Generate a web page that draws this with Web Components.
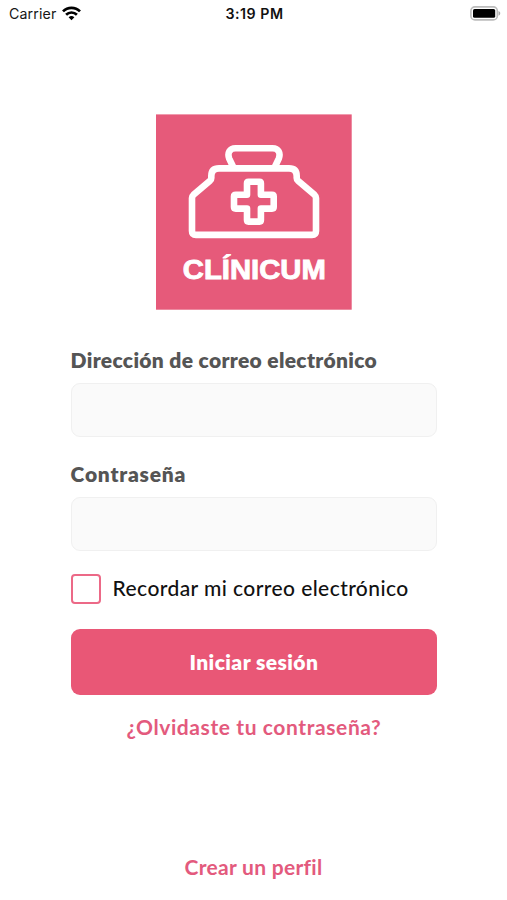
<!DOCTYPE html>
<html lang="es">
<head>
<meta charset="utf-8">
<title>Clínicum</title>
<style>
html,body{margin:0;height:100%;background:#fff;overflow:hidden}
body{font-family:Lato,"Open Sans",sans-serif;font-size:21px}
</style>
</head>
<body>
<login-screen></login-screen>
<script>
const define = (name, html, ready) => customElements.define(name, class extends HTMLElement {
  constructor() {
    super();
    this.attachShadow({ mode: 'open' }).innerHTML = html;
  }
  connectedCallback() { if (ready) ready(this, this.shadowRoot); }
});

// A single line of text, tracked so that its advance equals the width attribute.
define('tracked-text', `<style>
:host{display:inline-block;white-space:nowrap;line-height:24px}
span{display:inline-block;font-kerning:normal;font-variant-ligatures:none}
</style><span></span>`, (el, root) => {
  const span = root.querySelector('span');
  span.textContent = el.getAttribute('text');
  const want = Number(el.getAttribute('width'));
  const gap = (want - span.getBoundingClientRect().width) / span.textContent.length;
  span.style.letterSpacing = gap.toFixed(3) + 'px';
});

define('status-bar', `<style>
:host{display:grid;grid-template-columns:1fr auto 1fr;align-items:center;height:27px;padding:0 6px 0 9px;box-sizing:border-box;font-family:Inter,sans-serif;font-size:14.2px;color:#161616}
.left{display:flex;align-items:center;gap:5px}
.time{font-weight:600;color:#111;margin-right:1px}
.right{justify-self:end;display:flex}
svg{display:block}
</style>
<div class="left"><tracked-text text="Carrier" width="47.5"></tracked-text>
<svg width="19" height="15" viewBox="0 0 19 15"><g fill="none" stroke="#000" stroke-width="2.7"><path d="M1 5.4a12 12 0 0 1 17 0"/><path d="M4.1 8.7a7.7 7.7 0 0 1 10.8 0"/></g><path d="M9.5 14.2 6.6 11.3a4.2 4.2 0 0 1 5.8 0z"/></svg></div>
<div class="time"><tracked-text text="3:19 PM" width="58"></tracked-text></div>
<div class="right"><svg width="31" height="15" viewBox="0 0 31 15"><rect x=".9" y=".9" width="26.4" height="13" rx="4" fill="#fff" stroke="#bcbcbc" stroke-width="1.6"/><rect x="3" y="3" width="22.2" height="8.8" rx="1.6"/><path d="M28.5 5.1c2.3.8 2.3 3.8 0 4.6z" fill="#aaa"/></svg></div>`);

define('brand-logo', `<style>
:host{display:block;width:196px;height:196px}
svg{display:block}
text{font:bold 27px "Liberation Sans",Arial,sans-serif;fill:#fff;stroke:#fff;stroke-width:.9}
</style>
<svg width="196" height="196" viewBox="0 0 196 196">
<rect x="0" y=".4" width="195.7" height="195.3" fill="#e65a7a"/>
<g fill="none" stroke="#fff" stroke-width="6.6" stroke-linejoin="round">
<path d="M77.2 53 73.2 44.6C71.2 39 73.4 34.2 79.6 34.2H116.4C122.6 34.2 124.8 39 122.8 44.6L118.8 53"/>
<path d="M63 54.4H133Q140.7 54.4 140.7 62V64Q140.7 65.5 142 66.7L158.5 80.8Q160 82.2 160 84V117Q160 120.9 156 120.9H40Q36 120.9 36 117V84Q36 82.2 37.5 80.8L54 66.7Q55.3 65.5 55.3 64V62Q55.3 54.4 63 54.4Z"/>
<path d="M92.5 67.7H103.5Q104.9 67.7 104.9 69.2V80.8H116Q117.7 80.8 117.7 82.5V93Q117.7 94.6 116 94.6H104.9V106Q104.9 107.6 103.5 107.6H92.5Q91 107.6 91 106V94.6H79.8Q78 94.6 78 93V82.5Q78 80.8 79.8 80.8H91V69.2Q91 67.7 92.5 67.7Z"/>
</g>
<text x="26.8" y="165.3" textLength="143" lengthAdjust="spacingAndGlyphs">CLÍNICUM</text>
</svg>`);

define('form-field', `<style>
:host{display:block;color:#555;font-weight:800}
label{display:block;height:24px}
input{display:block;box-sizing:border-box;width:100%;height:54px;margin:12px 0 0;padding:0 14px;border:1.5px solid #f0f0f0;border-radius:9px;background:#fafafa;font:inherit;outline:0}
</style><label></label><input>`, (el, root) => {
  const t = document.createElement('tracked-text');
  t.setAttribute('text', el.getAttribute('label'));
  t.setAttribute('width', el.getAttribute('label-width'));
  root.querySelector('label').append(t);
  root.querySelector('input').type = el.getAttribute('type');
});

define('check-option', `<style>
:host{display:flex;align-items:center;gap:12px;height:30px;color:#111;font-weight:500}
i{box-sizing:border-box;width:30px;height:30px;border:2px solid #ec6987;border-radius:4px;background:#fff}
slot{display:block;padding-bottom:3px}
</style><i></i><slot></slot>`);

define('primary-button', `<style>
:host{display:block}
button{display:flex;width:100%;height:66px;align-items:center;justify-content:center;padding:0;border:0;border-radius:9px;background:#e95776;color:#fff;font:inherit;font-weight:800}
</style><button><slot></slot></button>`);

define('text-link', `<style>
:host{display:block;text-align:center;color:#e35a7d;font-weight:700}
a{color:inherit;text-decoration:none}
</style><a><slot></slot></a>`);

define('login-screen', `<style>
:host{display:flex;flex-direction:column;height:900px;width:507px;background:#fff}
brand-logo{margin:87px 0 0 156px}
main{display:flex;flex-direction:column;width:366.6px;margin:37px 0 0 70.6px}
.second{margin-top:24px}
check-option{margin-top:23px}
primary-button{margin-top:25px}
.forgot{margin-top:19px}
.create{margin:auto 0 21px}
</style>
<status-bar></status-bar>
<brand-logo></brand-logo>
<main>
<form-field label="Dirección de correo electrónico" label-width="306.5" type="email"></form-field>
<form-field class="second" label="Contraseña" label-width="115.5" type="password"></form-field>
<check-option><tracked-text text="Recordar mi correo electrónico" width="296"></tracked-text></check-option>
<primary-button><tracked-text text="Iniciar sesión" width="129"></tracked-text></primary-button>
<text-link class="forgot"><tracked-text text="¿Olvidaste tu contraseña?" width="255"></tracked-text></text-link>
</main>
<text-link class="create"><tracked-text text="Crear un perfil" width="138"></tracked-text></text-link>`);
</script>
</body>
</html>
